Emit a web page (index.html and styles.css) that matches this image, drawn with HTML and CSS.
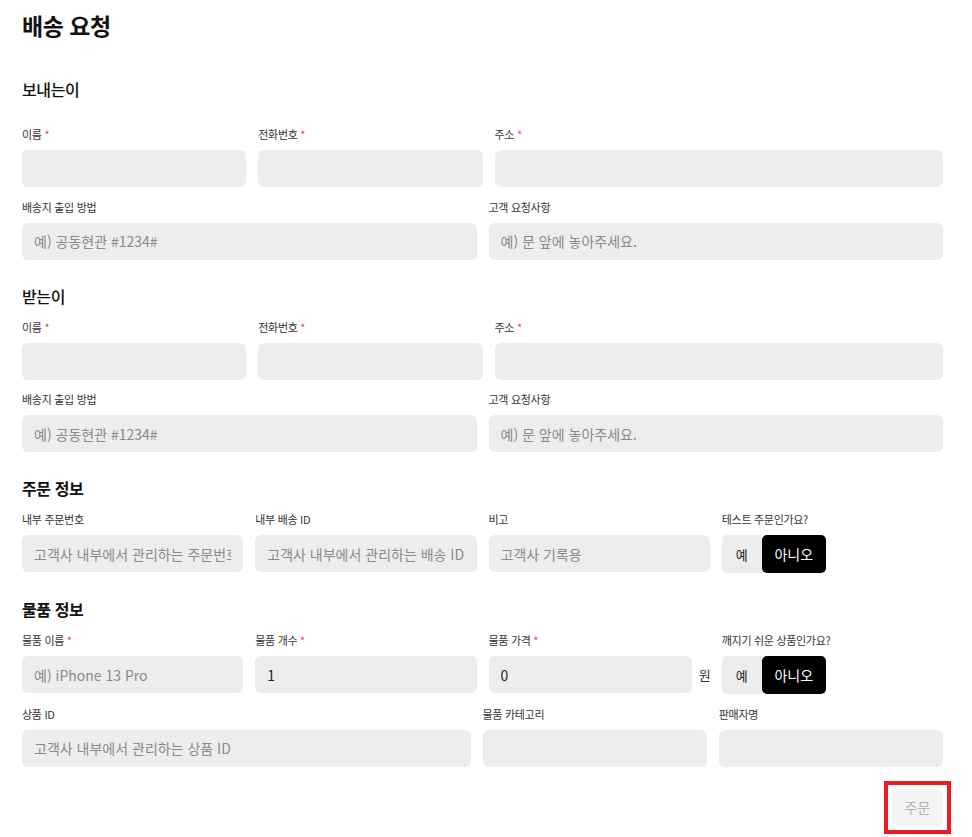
FILE: index.html
```html
<!DOCTYPE html>
<html lang="ko">
<head>
  <meta charset="UTF-8" />
  <meta name="viewport" content="width=device-width, initial-scale=1" />
  <title>배송 요청</title>
  <link rel="stylesheet" href="styles.css">
</head>
<body>
  <div class="page">
    <h1>배송 요청</h1>

    <h2 class="section-title light first">보내는이</h2>
    <div class="row cols-112">
      <div class="field">
        <label>이름 <span class="req">*</span></label>
        <input type="text" />
      </div>
      <div class="field">
        <label>전화번호 <span class="req">*</span></label>
        <input type="text" />
      </div>
      <div class="field">
        <label>주소 <span class="req">*</span></label>
        <input type="text" />
      </div>
    </div>
    <div class="row cols-11">
      <div class="field">
        <label>배송지 출입 방법</label>
        <input type="text" placeholder="예) 공동현관 #1234#" />
      </div>
      <div class="field">
        <label>고객 요청사항</label>
        <input type="text" placeholder="예) 문 앞에 놓아주세요." />
      </div>
    </div>

    <h2 class="section-title light">받는이</h2>
    <div class="row cols-112">
      <div class="field">
        <label>이름 <span class="req">*</span></label>
        <input type="text" />
      </div>
      <div class="field">
        <label>전화번호 <span class="req">*</span></label>
        <input type="text" />
      </div>
      <div class="field">
        <label>주소 <span class="req">*</span></label>
        <input type="text" />
      </div>
    </div>
    <div class="row cols-11">
      <div class="field">
        <label>배송지 출입 방법</label>
        <input type="text" placeholder="예) 공동현관 #1234#" />
      </div>
      <div class="field">
        <label>고객 요청사항</label>
        <input type="text" placeholder="예) 문 앞에 놓아주세요." />
      </div>
    </div>

    <h2 class="section-title">주문 정보</h2>
    <div class="row cols-1111">
      <div class="field">
        <label>내부 주문번호</label>
        <input type="text" placeholder="고객사 내부에서 관리하는 주문번호" />
      </div>
      <div class="field">
        <label>내부 배송 ID</label>
        <input type="text" placeholder="고객사 내부에서 관리하는 배송 ID" />
      </div>
      <div class="field">
        <label>비고</label>
        <input type="text" placeholder="고객사 기록용" />
      </div>
      <div class="field">
        <label>테스트 주문인가요?</label>
        <div class="toggle">
          <button class="opt">예</button>
          <button class="opt active">아니오</button>
        </div>
      </div>
    </div>

    <h2 class="section-title">물품 정보</h2>
    <div class="row cols-1111">
      <div class="field">
        <label>물품 이름 <span class="req">*</span></label>
        <input type="text" placeholder="예) iPhone 13 Pro" />
      </div>
      <div class="field">
        <label>물품 개수 <span class="req">*</span></label>
        <input type="text" value="1" />
      </div>
      <div class="field">
        <label>물품 가격 <span class="req">*</span></label>
        <div class="with-unit">
          <input type="text" value="0" />
          <span class="unit">원</span>
        </div>
      </div>
      <div class="field">
        <label>깨지기 쉬운 상품인가요?</label>
        <div class="toggle">
          <button class="opt">예</button>
          <button class="opt active">아니오</button>
        </div>
      </div>
    </div>
    <div class="row cols-211">
      <div class="field">
        <label>상품 ID</label>
        <input type="text" placeholder="고객사 내부에서 관리하는 상품 ID" />
      </div>
      <div class="field">
        <label>물품 카테고리</label>
        <input type="text" />
      </div>
      <div class="field">
        <label>판매자명</label>
        <input type="text" />
      </div>
    </div>

    <div class="submit-row">
      <span class="highlight">
        <button class="btn-submit" disabled>주문</button>
      </span>
    </div>
  </div>
</body>
</html>
```

FILE: styles.css
```css
body {
  margin: 0;
  font-family: "Noto Sans CJK KR", "Noto Sans", sans-serif;
  color: #111;
  background: #fff;
}

.page {
  padding: 9px 29px 0 22px;
}

h1 {
  margin: 0 0 37px;
  font-size: 23px;
  line-height: 32px;
  font-weight: 700;
  letter-spacing: -0.5px;
}

.section-title {
  margin: 25px 0 12px;
  font-size: 16px;
  line-height: 22px;
  font-weight: 700;
  letter-spacing: -0.4px;
}

.section-title.light {
  font-weight: 500;
}

.section-title.first {
  margin: 0 0 26px;
}

.row {
  display: grid;
  column-gap: 12px;
  margin-bottom: 11.5px;
}

.cols-112 { grid-template-columns: 1fr 1fr 2fr; }
.cols-11 { grid-template-columns: 1fr 1fr; }
.cols-1111 { grid-template-columns: repeat(4, 1fr); }
.cols-211 { grid-template-columns: 2fr 1fr 1fr; }

.field {
  display: flex;
  flex-direction: column;
  min-width: 0;
}

.field label {
  font-size: 11px;
  line-height: 16px;
  color: #333;
  margin-bottom: 8px;
  letter-spacing: -0.3px;
}

.req {
  color: #f04452;
}

input[type="text"] {
  width: 100%;
  height: 37px;
  box-sizing: border-box;
  border: none;
  border-radius: 6px;
  background: #ededed;
  padding: 0 12px;
  font-family: inherit;
  font-size: 14px;
  color: #222;
  outline: none;
}

input::placeholder {
  color: #8a8a8a;
}

.with-unit {
  display: flex;
  align-items: center;
  gap: 7px;
}

.with-unit input {
  flex: 1;
}

.unit {
  font-size: 13px;
  color: #333;
  width: 11px;
}

.toggle {
  display: flex;
}

.opt {
  width: 40px;
  height: 38px;
  border: none;
  background: #ededed;
  color: #222;
  font-family: inherit;
  font-size: 13px;
  padding: 0;
  border-radius: 5px 0 0 5px;
  cursor: pointer;
}

.opt.active {
  width: 64px;
  background: #000;
  color: #fff;
  border-radius: 5px;
  font-size: 14px;
}

.submit-row {
  display: flex;
  justify-content: flex-end;
  margin-top: 14px;
  margin-right: -8px;
}

.highlight {
  display: flex;
  padding: 4px;
  border: 4px solid #ed1c24;
}

.btn-submit {
  width: 51px;
  height: 37px;
  border: none;
  border-radius: 6px;
  background: #f4f4f4;
  color: #b5b5b5;
  font-family: inherit;
  font-size: 14px;
}
```
